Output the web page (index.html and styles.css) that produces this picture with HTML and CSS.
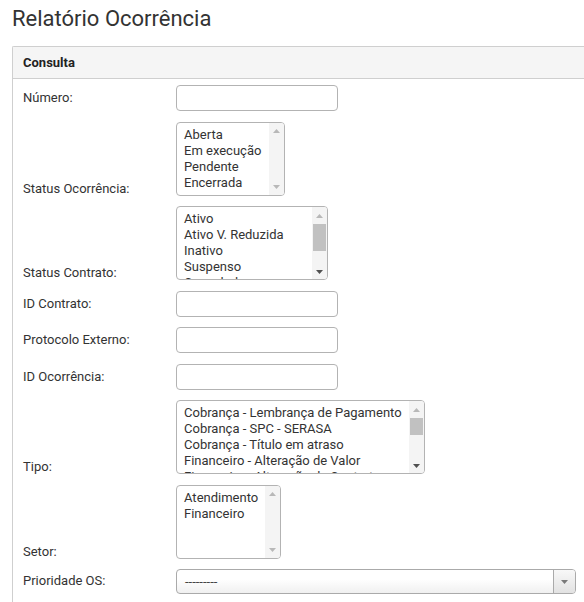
FILE: index.html
```html
<!DOCTYPE html>
<html lang="pt-BR">
<head>
<meta charset="utf-8">
<title>Relatório Ocorrência</title>
<link rel="stylesheet" href="styles.css">
</head>
<body>
<div class="page">
  <h1 class="title">Relatório Ocorrência</h1>
  <section class="panel">
    <header class="panel-head">Consulta</header>
    <div class="panel-body">
      <div class="row">
        <label class="lbl">Número:</label>
        <div class="input"></div>
      </div>
      <div class="row row-list">
        <label class="lbl">Status Ocorrência:</label>
        <div class="listbox w-status">
          <div class="opts">
            <div>Aberta</div><div>Em execução</div><div>Pendente</div><div>Encerrada</div>
          </div>
          <div class="sbar">
            <div class="sbtn"><svg width="7" height="4" viewBox="0 0 7 4"><polygon points="0,4 3.5,0 7,4" class="arr-off"/></svg></div>
            <div class="track"></div>
            <div class="sbtn sbtn-down"><svg width="7" height="4" viewBox="0 0 7 4"><polygon points="0,0 7,0 3.5,4" class="arr-off"/></svg></div>
          </div>
        </div>
      </div>
      <div class="row row-list">
        <label class="lbl">Status Contrato:</label>
        <div class="listbox w-contrato">
          <div class="opts">
            <div>Ativo</div><div>Ativo V. Reduzida</div><div>Inativo</div><div>Suspenso</div><div>Cancelado</div>
          </div>
          <div class="sbar">
            <div class="sbtn"><svg width="7" height="4" viewBox="0 0 7 4"><polygon points="0,4 3.5,0 7,4" class="arr-off"/></svg></div>
            <div class="track"><div class="thumb thumb-27"></div></div>
            <div class="sbtn sbtn-down"><svg width="7" height="4" viewBox="0 0 7 4"><polygon points="0,0 7,0 3.5,4" class="arr-on"/></svg></div>
          </div>
        </div>
      </div>
      <div class="row">
        <label class="lbl">ID Contrato:</label>
        <div class="input"></div>
      </div>
      <div class="row">
        <label class="lbl">Protocolo Externo:</label>
        <div class="input"></div>
      </div>
      <div class="row">
        <label class="lbl">ID Ocorrência:</label>
        <div class="input"></div>
      </div>
      <div class="row row-list">
        <label class="lbl">Tipo:</label>
        <div class="listbox w-tipo">
          <div class="opts">
            <div>Cobrança - Lembrança de Pagamento</div><div>Cobrança - SPC - SERASA</div><div>Cobrança - Título em atraso</div><div>Financeiro - Alteração de Valor</div><div>Financeiro - Alteração de Contrato</div>
          </div>
          <div class="sbar">
            <div class="sbtn"><svg width="7" height="4" viewBox="0 0 7 4"><polygon points="0,4 3.5,0 7,4" class="arr-off"/></svg></div>
            <div class="track"><div class="thumb thumb-17"></div></div>
            <div class="sbtn sbtn-down"><svg width="7" height="4" viewBox="0 0 7 4"><polygon points="0,0 7,0 3.5,4" class="arr-on"/></svg></div>
          </div>
        </div>
      </div>
      <div class="row row-list">
        <label class="lbl">Setor:</label>
        <div class="listbox w-setor">
          <div class="opts">
            <div>Atendimento</div><div>Financeiro</div>
          </div>
          <div class="sbar">
            <div class="sbtn"><svg width="7" height="4" viewBox="0 0 7 4"><polygon points="0,4 3.5,0 7,4" class="arr-off"/></svg></div>
            <div class="track"></div>
            <div class="sbtn sbtn-down"><svg width="7" height="4" viewBox="0 0 7 4"><polygon points="0,0 7,0 3.5,4" class="arr-off"/></svg></div>
          </div>
        </div>
      </div>
      <div class="row row-drop">
        <label class="lbl">Prioridade OS:</label>
        <div class="dropdown">
          <span class="drop-text">---------</span>
          <span class="drop-btn"><svg width="7" height="4" viewBox="0 0 7 4"><polygon points="0,0 7,0 3.5,4" fill="#7a7a7a"/></svg></span>
        </div>
      </div>
    </div>
  </section>
</div>
</body>
</html>
```
FILE: styles.css
```css
html, body {
  margin: 0;
  padding: 0;
  overflow: hidden;
  background: #fff;
}
body {
  font-family: Roboto, "Liberation Sans", sans-serif;
  font-size: 13px;
  color: #333;
}
.page {
  padding-left: 12px;
}
.title {
  margin: 0 0 11px 0;
  padding-top: 3px;
  font-size: 22px;
  line-height: 32px;
  font-weight: 400;
  color: #333;
}
.panel {
  width: 600px;
  border: 1px solid #cfcfcf;
  border-right: none;
  border-radius: 2px 0 0 0;
}
.panel-head {
  background: #f5f5f5;
  border-bottom: 1px solid #cfcfcf;
  height: 31px;
  line-height: 31px;
  padding: 0 10px;
  font-weight: 700;
  color: #222;
}
.panel-body {
  padding: 6px 10px 10px 10px;
  display: flex;
  flex-direction: column;
  gap: 10.5px;
}
.row {
  display: flex;
  align-items: flex-end;
}
.lbl {
  flex: 0 0 153px;
  line-height: 16px;
  padding-bottom: 5px;
  color: #333;
}
.row-list .lbl {
  padding-bottom: 0;
  margin-bottom: -1px;
}
.row-drop .lbl {
  padding-bottom: 5px;
}
.input {
  width: 162px;
  height: 26px;
  box-sizing: border-box;
  border: 1px solid #b3b3b3;
  border-radius: 4px;
  background: #fff;
}
.listbox {
  height: 74px;
  box-sizing: border-box;
  border: 1px solid #b3b3b3;
  border-radius: 4px;
  display: flex;
  overflow: hidden;
  background: #fff;
}
.w-status { width: 109px; }
.w-contrato { width: 152px; }
.w-tipo { width: 249px; }
.w-setor { width: 105px; }
.opts {
  flex: 1;
  padding: 4px 0 0 7px;
  line-height: 16px;
  color: #333;
  white-space: nowrap;
  overflow: hidden;
}
.sbar {
  flex: 0 0 15px;
  display: flex;
  flex-direction: column;
  background: #f4f4f4;
}
.sbtn {
  height: 17px;
  display: flex;
  align-items: center;
  justify-content: center;
}
.sbtn-down {
  height: 15px;
}
.track {
  flex: 1;
  display: flex;
  flex-direction: column;
}
.thumb {
  margin: 0 1px;
  background: #c1c1c1;
}
.thumb-27 { height: 27px; }
.thumb-17 { height: 17px; }
.arr-off { fill: #b8b8b8; }
.arr-on { fill: #505050; }
.dropdown {
  width: 400px;
  height: 25px;
  box-sizing: border-box;
  border: 1px solid #aaa;
  border-radius: 4px;
  background: linear-gradient(#ffffff 40%, #f0f0f0);
  display: flex;
  align-items: stretch;
  overflow: hidden;
}
.drop-text {
  flex: 1;
  padding-left: 8px;
  line-height: 23px;
  color: #444;
}
.drop-btn {
  flex: 0 0 21px;
  border-left: 1px solid #aaa;
  background: linear-gradient(#f8f8f8, #e2e2e2);
  display: flex;
  align-items: center;
  justify-content: center;
}
```
